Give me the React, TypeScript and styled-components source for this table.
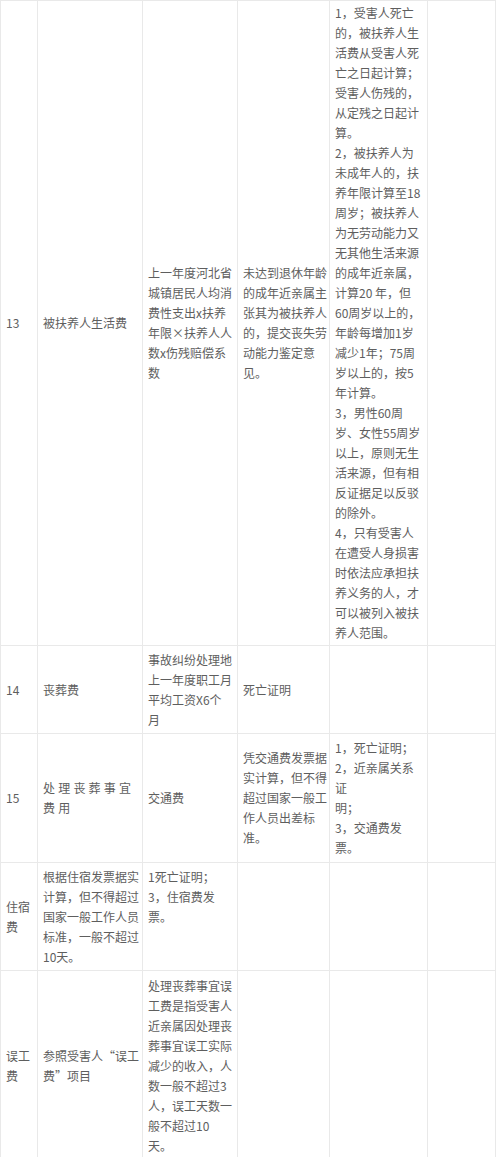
import React from "react";
import styled, { createGlobalStyle } from "styled-components";

const GlobalStyle = createGlobalStyle`
    html, body {
        margin: 0;
        padding: 0;
        background: #ffffff;
    }
    body {
        font-family: "Noto Sans CJK SC", "Noto Sans", sans-serif;
        color: #555555;
    }
`;

type CellData = {
    lines: string[];
    top?: boolean;
    spaced?: boolean;
};

type RowData = {
    height?: number;
    cells: CellData[];
};

const colWidths = [37, 105, 95, 92, 98, 68];

const rows: RowData[] = [
    {
        cells: [
            { lines: ["13"] },
            { lines: ["被扶养人生活费"] },
            {
                lines: [
                    "上一年度河北省",
                    "城镇居民人均消",
                    "费性支出x扶养",
                    "年限×扶养人人",
                    "数x伤残赔偿系",
                    "数",
                ],
            },
            {
                lines: [
                    "未达到退休年龄",
                    "的成年近亲属主",
                    "张其为被扶养人",
                    "的，提交丧失劳",
                    "动能力鉴定意",
                    "见。",
                ],
            },
            {
                lines: [
                    "1，受害人死亡",
                    "的，被扶养人生",
                    "活费从受害人死",
                    "亡之日起计算；",
                    "受害人伤残的，",
                    "从定残之日起计",
                    "算。",
                    "2，被扶养人为",
                    "未成年人的，扶",
                    "养年限计算至18",
                    "周岁；被扶养人",
                    "为无劳动能力又",
                    "无其他生活来源",
                    "的成年近亲属，",
                    "计算20 年，但",
                    "60周岁以上的，",
                    "年龄每增加1岁",
                    "减少1年；75周",
                    "岁以上的，按5",
                    "年计算。",
                    "3，男性60周",
                    "岁、女性55周岁",
                    "以上，原则无生",
                    "活来源，但有相",
                    "反证据足以反驳",
                    "的除外。",
                    "4，只有受害人",
                    "在遭受人身损害",
                    "时依法应承担扶",
                    "养义务的人，才",
                    "可以被列入被扶",
                    "养人范围。",
                ],
            },
            { lines: [] },
        ],
    },
    {
        height: 88,
        cells: [
            { lines: ["14"] },
            { lines: ["丧葬费"] },
            { lines: ["事故纠纷处理地", "上一年度职工月", "平均工资X6个", "月"] },
            { lines: ["死亡证明"] },
            { lines: [] },
            { lines: [] },
        ],
    },
    {
        height: 129,
        cells: [
            { lines: ["15"] },
            { lines: ["处理丧葬事宜", "费用"], spaced: true },
            { lines: ["交通费"] },
            {
                lines: [
                    "凭交通费发票据",
                    "实计算，但不得",
                    "超过国家一般工",
                    "作人员出差标",
                    "准。",
                ],
            },
            {
                lines: [
                    "1，死亡证明；",
                    "2，近亲属关系",
                    "证",
                    "明；",
                    "3，交通费发",
                    "票。",
                ],
            },
            { lines: [] },
        ],
    },
    {
        height: 108,
        cells: [
            { lines: ["住宿", "费"] },
            {
                lines: [
                    "根据住宿发票据实",
                    "计算，但不得超过",
                    "国家一般工作人员",
                    "标准，一般不超过",
                    "10天。",
                ],
            },
            { lines: ["1死亡证明；", "3，住宿费发", "票。"], top: true },
            { lines: [] },
            { lines: [] },
            { lines: [] },
        ],
    },
    {
        height: 190,
        cells: [
            { lines: ["误工", "费"] },
            { lines: ["参照受害人“误工", "费”项目"] },
            {
                lines: [
                    "处理丧葬事宜误",
                    "工费是指受害人",
                    "近亲属因处理丧",
                    "葬事宜误工实际",
                    "减少的收入，人",
                    "数一般不超过3",
                    "人，误工天数一",
                    "般不超过10",
                    "天。",
                ],
            },
            { lines: [] },
            { lines: [] },
            { lines: [] },
        ],
    },
];

const Page = styled.div`
    width: 500px;
    overflow: hidden;
`;

const Table = styled.table`
    width: 496px;
    table-layout: fixed;
    border-collapse: collapse;
    border-left: 1px solid #ebebeb;
`;

const Row = styled.tr<{ $height?: number }>`
    height: ${(p) => (p.$height ? `${p.$height}px` : "auto")};
`;

const Cell = styled.td<{ $top?: boolean }>`
    border: 1px solid #e9e9e9;
    padding: 2px 0 2px 5px;
    vertical-align: ${(p) => (p.$top ? "top" : "middle")};
    padding-top: ${(p) => (p.$top ? "4px" : "2px")};
    font-size: 12px;
    line-height: 20px;
    color: #5e5e5e;
    white-space: nowrap;
    overflow: hidden;
`;

const Line = styled.span<{ $spaced?: boolean }>`
    display: block;
    letter-spacing: ${(p) => (p.$spaced ? "3.2px" : "0")};
`;

export default function App() {
    return (
        <Page>
            <GlobalStyle />
            <Table>
                <colgroup>
                    {colWidths.map((w, i) => (
                        <col key={i} style={{ width: w }} />
                    ))}
                </colgroup>
                <tbody>
                    {rows.map((row, r) => (
                        <Row key={r} $height={row.height}>
                            {row.cells.map((cell, c) => (
                                <Cell key={c} $top={cell.top}>
                                    {cell.lines.map((line, l) => (
                                        <Line key={l} $spaced={cell.spaced}>
                                            {line}
                                        </Line>
                                    ))}
                                </Cell>
                            ))}
                        </Row>
                    ))}
                </tbody>
            </Table>
        </Page>
    );
}
